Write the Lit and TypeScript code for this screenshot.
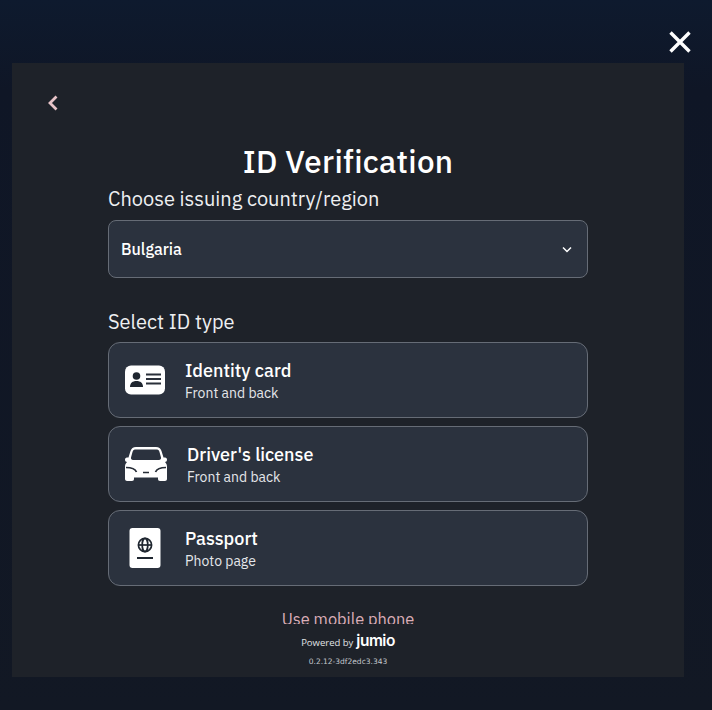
import { LitElement, html, css } from 'lit';
import { customElement } from 'lit/decorators.js';

const idCard = html`<svg width="40" height="30" viewBox="0 0 40 30"><rect width="40" height="29" y="0.5" rx="6" fill="#fff"/><circle cx="11.500" cy="11" r="3.800" fill="#1f2630"/><path d="M5 22c0-4 2.500-6 6.500-6s6.500 2 6.500 6z" fill="#1f2630"/><path d="M21 9.500h15M21 14h15M21 18.500h15" stroke="#2a303a" stroke-width="1.800"/></svg>`;

const car = html`<svg width="42" height="34" viewBox="0 0 42 34"><path fill="#fff" fill-rule="evenodd" d="M11 0H31C34 0 35.500 1.500 36.500 4L38.500 10.500H40C41.300 10.500 42 11.500 42 12.700C42 14 41 15 40 15C41.500 16.500 42 18 42 20V32C42 33.300 41 34 40 34H35C33.700 34 33 33.200 33 32V30.500H9V32C9 33.200 8.300 34 7 34H2C1 34 0 33.300 0 32V20C0 18 .5 16.500 2 15C1 15 0 14 0 12.700C0 11.500 .7 10.500 2 10.500H3.500L5.500 4C6.500 1.500 8 0 11 0ZM10 2.500C8.500 2.500 8 3.500 7.500 5L6 10.500C5.800 12 6.500 13 8 13H34C35.500 13 36.200 12 36 10.500L34.500 5C34 3.500 33.500 2.500 32 2.500Z"/><path d="M1 20.500C6 20.500 10 21.500 11.500 25M41 20.500C36 20.500 32 21.500 30.500 25M18 25.500h6" stroke="#262c36" stroke-width="1.700" fill="none"/></svg>`;

const passport = html`<svg width="32" height="40" viewBox="0 0 32 40"><rect width="31" height="40" x="0.500" rx="3" fill="#fff"/><g fill="none" stroke="#1f2630" stroke-width="1.700"><circle cx="16" cy="17" r="6.600"/><ellipse cx="16" cy="17" rx="2.800" ry="6.600"/><path d="M9.400 17h13.200"/></g><path d="M8 30h16" stroke="#1f2630" stroke-width="2"/></svg>`;

const options = [
  { icon: idCard, title: 'Identity card', sub: 'Front and back', wide: false },
  { icon: car, title: "Driver's license", sub: 'Front and back', wide: true },
  { icon: passport, title: 'Passport', sub: 'Photo page', wide: false },
];

@customElement('app-root')
export class AppRoot extends LitElement {
  static styles = css`
    :host {
      display: block;
      position: relative;
      width: 712px;
      height: 710px;
      box-sizing: border-box;
      padding: 63px 28px 33px 12px;
      overflow: hidden;
      background: linear-gradient(#0e1a2e 0, #0f1626 90px, #121824 100%);
      font-family: 'IBM Plex Sans', Inter, Roboto, sans-serif;
      color: #fff;
    }
    .close {
      position: absolute;
      top: 30px;
      left: 668px;
      width: 24px;
      height: 24px;
    }
    .modal {
      height: 100%;
      display: flex;
      flex-direction: column;
      background: #1e2229;
    }
    .scroll {
      height: 561px;
      flex: none;
      overflow: hidden;
      display: flex;
      flex-direction: column;
      align-items: center;
    }
    .scroll > * {
      flex: none;
    }
    .back {
      align-self: flex-start;
      margin: 32px 0 0 35px;
      height: 16px;
    }
    h1 {
      margin: 31px 0 0;
      font-size: 31.400px;
      line-height: 40px;
      font-weight: 500;
      letter-spacing: 0.3px;
    }
    .body {
      width: 480px;
    }
    .label {
      font-size: 20px;
      line-height: 26px;
      font-weight: 400;
      color: #eef0f2;
    }
    .choose {
      margin-top: 4px;
    }
    .select {
      margin-top: 8px;
      height: 58px;
      box-sizing: border-box;
      padding: 0 15px 0 12px;
      display: flex;
      align-items: center;
      justify-content: space-between;
      background: #2b323e;
      border: 1px solid #666c76;
      border-radius: 8px;
      font-size: 16px;
      font-weight: 500;
    }
    .pick {
      margin-top: 31px;
    }
    .cards {
      margin-top: 7px;
      display: flex;
      flex-direction: column;
      gap: 8px;
    }
    .card {
      height: 76px;
      box-sizing: border-box;
      padding: 0 16px;
      display: flex;
      align-items: center;
      gap: 20px;
      background: #2b323e;
      border: 1px solid #666c76;
      border-radius: 12px;
    }
    .icon {
      width: 40px;
      display: flex;
      justify-content: center;
    }
    .icon.wide {
      width: 42px;
    }
    .text {
      padding-top: 2px;
    }
    .title {
      font-size: 18px;
      line-height: 24px;
      font-weight: 500;
    }
    .sub {
      font-size: 14px;
      line-height: 20px;
      color: #e4e6ea;
    }
    .mobile {
      margin-top: 21px;
      text-align: center;
      font-size: 16.400px;
      line-height: 24px;
      color: #dcaeb8;
    }
    .footer {
      display: flex;
      flex-direction: column;
      align-items: center;
    }
    .powered {
      margin-top: 7px;
      display: flex;
      align-items: baseline;
      gap: 3px;
      font-family: 'Open Sans', sans-serif;
      font-size: 9.500px;
      line-height: 20px;
      color: #e0e2e6;
    }
    .brand {
      font-family: Inter, sans-serif;
      font-size: 15.500px;
      font-weight: 600;
      letter-spacing: -0.5px;
      color: #fff;
    }
    .version {
      margin-top: 3px;
      font-family: 'DejaVu Sans', sans-serif;
      font-size: 7.500px;
      line-height: 12px;
      color: #c4c8ce;
    }
  `;

  render() {
    return html`
      <svg class="close" viewBox="0 0 24 24"><path d="M2.500 2.500l19 19M21.500 2.500l-19 19" stroke="#fff" stroke-width="3.400" fill="none"/></svg>
      <div class="modal">
        <div class="scroll">
          <svg class="back" width="12" height="16" viewBox="0 0 12 16"><path d="M9.500 1.500L3 8l6.500 6.500" stroke="#e8c4c8" stroke-width="2.800" fill="none"/></svg>
          <h1>ID Verification</h1>
          <div class="body">
            <div class="label choose">Choose issuing country/region</div>
            <div class="select">
              <span>Bulgaria</span>
              <svg width="10" height="7" viewBox="0 0 10 7"><path d="M1 1.500l4 4 4-4" stroke="#fff" stroke-width="1.500" fill="none"/></svg>
            </div>
            <div class="label pick">Select ID type</div>
            <div class="cards">
              ${options.map(
                (o) => html`<div class="card">
                  <div class="icon ${o.wide ? 'wide' : ''}">${o.icon}</div>
                  <div class="text">
                    <div class="title">${o.title}</div>
                    <div class="sub">${o.sub}</div>
                  </div>
                </div>`
              )}
            </div>
            <div class="mobile">Use mobile phone</div>
          </div>
        </div>
        <div class="footer">
          <div class="powered">Powered by <span class="brand">jumio</span></div>
          <div class="version">0.2.12-3df2edc3.343</div>
        </div>
      </div>
    `;
  }
}
